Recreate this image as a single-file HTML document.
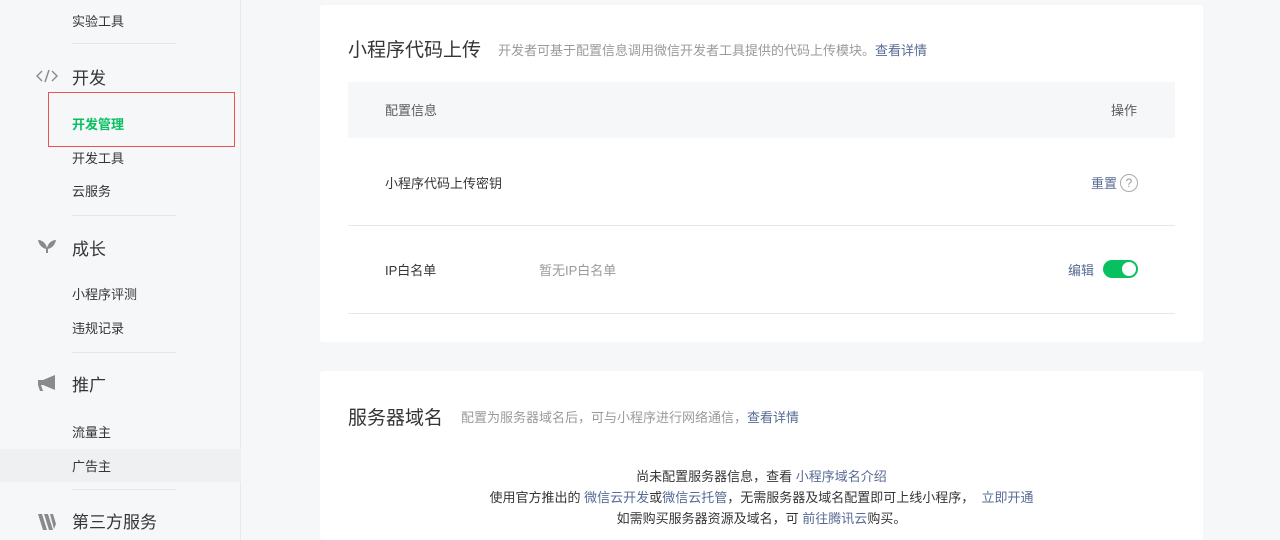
<!DOCTYPE html>
<html><head><meta charset="utf-8"><style>
*{margin:0;padding:0;box-sizing:border-box}
html,body{width:1280px;height:540px;overflow:hidden}
body{background:#f6f7f9;font-family:"Liberation Sans","Noto Sans CJK SC",sans-serif;color:#353535;position:relative}
.a{position:absolute;white-space:nowrap}
.side{position:absolute;left:0;top:0;width:241px;height:540px;background:#f6f7f9;border-right:1px solid #e8e9eb}
.sub{font-size:13px;color:#353535;left:72px}
.sec{font-size:17px;color:#353535;left:72px}
.hr{position:absolute;left:72px;width:104px;height:1px;background:#e4e6e9}
.card{position:absolute;left:320px;width:883px;background:#fff;border-radius:3px}
.link{color:#576b95}
.gray{color:#9a9a9a}
</style></head><body>
<div class="side">
<div class="a sub" style="top:11px">实验工具</div>
<div class="hr" style="top:43px"></div>
<svg class="a" style="left:36px;top:69px" width="22" height="14" viewBox="0 0 22 14"><path d="M6 2L1 7l5 5M16 2l5 5-5 5M13 1L9 13" fill="none" stroke="#888" stroke-width="1.4"/></svg>
<div class="a sec" style="top:64px">开发</div>
<div class="a sub" style="top:114px;color:#07c160;font-weight:bold">开发管理</div>
<div class="a" style="left:48px;top:92px;width:187px;height:55px;border:1px solid #f05050"></div>
<div class="a sub" style="top:148px">开发工具</div>
<div class="a sub" style="top:181px">云服务</div>
<div class="hr" style="top:215px"></div>
<svg class="a" style="left:37px;top:238px" width="20" height="16" viewBox="0 0 20 16"><path d="M1 2c4 0 8 3 9 8 1-5 5-8 9-8-1 5-4 8-8 9v4h-2v-4C5 10 2 7 1 2z" fill="#8a8a8a"/></svg>
<div class="a sec" style="top:235px">成长</div>
<div class="a sub" style="top:284px">小程序评测</div>
<div class="a sub" style="top:318px">违规记录</div>
<div class="hr" style="top:352px"></div>
<svg class="a" style="left:37px;top:374px" width="20" height="18" viewBox="0 0 20 18"><path d="M1 6h5l12-5v15L6 11H4l2 6H3L1 11z" fill="#8a8a8a"/></svg>
<div class="a sec" style="top:371px">推广</div>
<div class="a sub" style="top:422px">流量主</div>
<div class="a" style="left:0;top:449px;width:241px;height:33px;background:#eff0f2"></div>
<div class="a sub" style="top:456px">广告主</div>
<div class="hr" style="top:489px"></div>
<svg class="a" style="left:37px;top:513px" width="20" height="18" viewBox="0 0 20 18"><path d="M1 1h4l5 16H6zM7 1h4l5 16h-4zM13 1h3l3 10-2 5z" fill="#8a8a8a"/></svg>
<div class="a sec" style="top:508px">第三方服务</div>
</div>

<div class="card" style="top:5px;height:337px">
<div class="a" style="left:28px;top:30px;font-size:19px">小程序代码上传</div>
<div class="a gray" style="left:178px;top:35px;font-size:13px">开发者可基于配置信息调用微信开发者工具提供的代码上传模块。<span class="link">查看详情</span></div>
<div class="a" style="left:28px;top:77px;width:827px;height:56px;background:#f6f7f9"></div>
<div class="a" style="left:65px;top:95px;font-size:13px;color:#5c5c5c">配置信息</div>
<div class="a" style="left:791px;top:95px;font-size:13px;color:#5c5c5c">操作</div>
<div class="a" style="left:65px;top:168px;font-size:13px">小程序代码上传密钥</div>
<div class="a link" style="left:771px;top:168px;font-size:13px">重置</div>
<div class="a" style="left:800px;top:169px;width:18px;height:18px;border:1px solid #aaa;border-radius:50%;font-size:12px;color:#999;text-align:center;line-height:16px">?</div>
<div class="a" style="left:28px;top:220px;width:827px;height:1px;background:#e7e7e7"></div>
<div class="a" style="left:65px;top:255px;font-size:13px">IP白名单</div>
<div class="a gray" style="left:219px;top:255px;font-size:13px">暂无IP白名单</div>
<div class="a link" style="left:748px;top:255px;font-size:13px">编辑</div>
<div class="a" style="left:783px;top:255px;width:35px;height:18px;border-radius:9px;background:#07c160"><div style="position:absolute;right:2px;top:2px;width:14px;height:14px;border-radius:50%;background:#fff"></div></div>
<div class="a" style="left:28px;top:308px;width:827px;height:1px;background:#e7e7e7"></div>
</div>

<div class="card" style="top:371px;height:169px">
<div class="a" style="left:28px;top:32px;font-size:19px">服务器域名</div>
<div class="a gray" style="left:141px;top:36px;font-size:13px">配置为服务器域名后，可与小程序进行网络通信，<span class="link">查看详情</span></div>
<div class="a" style="left:0;width:883px;top:95px;text-align:center;font-size:13px;line-height:21px;color:#353535">
尚未配置服务器信息，查看 <span class="link">小程序域名介绍</span><br>
使用官方推出的 <span class="link">微信云开发</span>或<span class="link">微信云托管</span>，无需服务器及域名配置即可上线小程序， &nbsp;<span class="link">立即开通</span><br>
如需购买服务器资源及域名，可 <span class="link">前往腾讯云</span>购买。
</div>
</div>
</body></html>
